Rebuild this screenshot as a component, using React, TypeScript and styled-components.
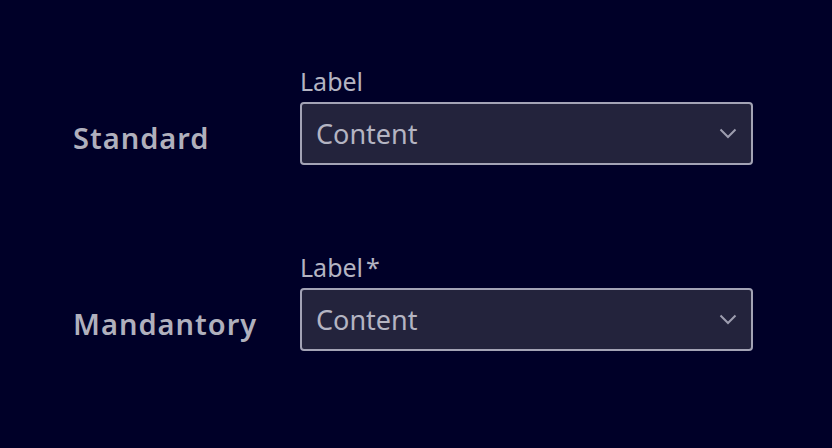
import React from 'react';
import styled, { createGlobalStyle } from 'styled-components';

const GlobalStyle = createGlobalStyle`
  html, body {
    margin: 0;
    padding: 0;
    background: #000028;
  }
  body {
    font-family: "Noto Sans", "Open Sans", sans-serif;
  }
`;

interface FieldProps {
  title: string;
  label: string;
  required?: boolean;
}

const Chevron = () => (
  <svg width="18" height="11" viewBox="0 0 18 11" fill="none">
    <path d="M1.5 1.5 L9 9 L16.5 1.5" stroke="#9d9daf" strokeWidth="2" />
  </svg>
);

const SelectRow = ({ title, label, required }: FieldProps) => (
  <Row>
    <RowTitle>{title}</RowTitle>
    <Field>
      <FieldLabel>
        {label}
        {required && <Star>*</Star>}
      </FieldLabel>
      <SelectBox>
        <Value>Content</Value>
        <Chevron />
      </SelectBox>
    </Field>
  </Row>
);

const App = () => {
  return (
    <Page>
      <GlobalStyle />
      <Form>
        <SelectRow title="Standard" label="Label" />
        <SelectRow title="Mandantory" label="Label" required />
      </Form>
    </Page>
  );
};

const Page = styled.main`
  width: 832px;
  height: 448px;
  background: #000028;
  box-sizing: border-box;
  padding: 64px 0 0 73px;
`;

const Form = styled.div`
  display: flex;
  flex-direction: column;
  gap: 85px;
`;

const Row = styled.div`
  display: grid;
  grid-template-columns: 227px 453px;
  align-items: end;
`;

const RowTitle = styled.div`
  font-size: 29px;
  font-weight: 600;
  letter-spacing: 1px;
  color: #b0b0bd;
  line-height: 34px;
  padding-bottom: 10px;
`;

const Field = styled.div`
  display: flex;
  flex-direction: column;
  gap: 4px;
`;

const FieldLabel = styled.label`
  font-size: 25px;
  line-height: 34px;
  color: #b4b4c2;
`;

const Star = styled.span`
  margin-left: 3px;
`;

const SelectBox = styled.div`
  height: 63px;
  box-sizing: border-box;
  border: 2px solid #a3a3b5;
  border-radius: 4px;
  background: #23233c;
  display: flex;
  align-items: center;
  justify-content: space-between;
  padding: 0 14px 0 14px;
`;

const Value = styled.span`
  font-size: 27px;
  color: #b4b4c2;
`;

export default App;
